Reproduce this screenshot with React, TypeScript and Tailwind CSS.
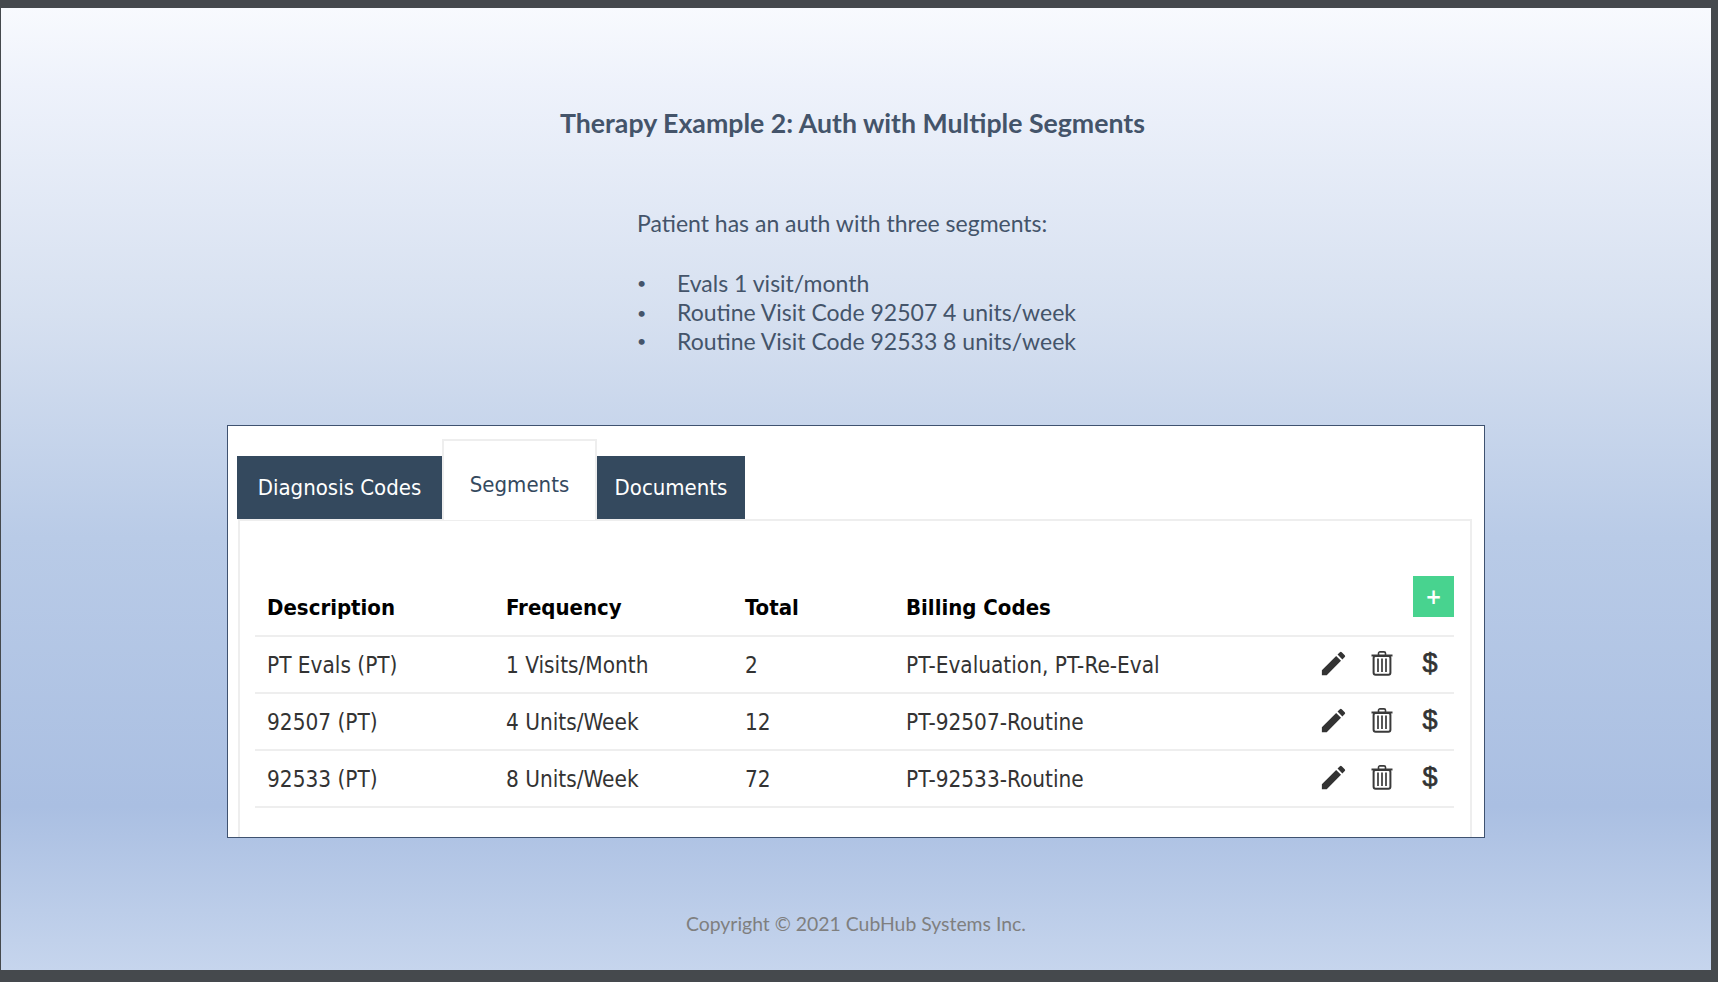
import React from "react";
import { MdEdit } from "react-icons/md";

const rows = [
  ["PT Evals (PT)", "1 Visits/Month", "2", "PT-Evaluation, PT-Re-Eval"],
  ["92507 (PT)", "4 Units/Week", "12", "PT-92507-Routine"],
  ["92533 (PT)", "8 Units/Week", "72", "PT-92533-Routine"],
];

function Trash() {
  return (
    <svg width="22" height="25" viewBox="0 0 22 25" fill="none" stroke="#3a3a3a" strokeWidth="1.6">
      <path d="M0.5 4.5H21.5" strokeWidth="2" />
      <path d="M7.5 4V2.2C7.5 1.4 8.2 0.9 9 0.9H13C13.8 0.9 14.5 1.4 14.5 2.2V4" />
      <rect x="2.6" y="5" width="16.8" height="18.8" rx="2" strokeWidth="2" />
      <path d="M7 7.5V21M11 7.5V21M15 7.5V21" strokeWidth="1.7" />
    </svg>
  );
}

function Actions() {
  return (
    <div className="flex items-center justify-end h-full pr-[12px] -mt-[5px]">
      <span className="w-[24px] flex justify-center"><MdEdit size={31} color="#333333" className="shrink-0" /></span>
      <span className="w-[25px] ml-[24px] flex justify-center"><Trash /></span>
      <span className="w-[24px] ml-[24px] flex justify-center text-[27px] leading-none text-[#333333] [-webkit-text-stroke:0.7px_#333333] font-['Liberation_Sans',sans-serif]">$</span>
    </div>
  );
}

export default function App() {
  return (
    <div className="h-[982px] w-[1718px] overflow-hidden bg-[#45494d] pt-[8px] pl-[1px] pr-[7px] pb-[12px] font-['Lato',sans-serif]">
      <div className="flex h-full flex-col items-start bg-[linear-gradient(180deg,#f8fafe_0%,#eef2fb_8%,#d6e0f0_32%,#b9cbe7_55%,#aabfe2_83%,#c6d5ed_100%)]">
        <h1 className="ml-[559px] mt-[96px] h-[38px] text-[26.7px] leading-[38px] font-bold text-[#44546a] whitespace-nowrap">
          Therapy Example 2: Auth with Multiple Segments
        </h1>
        <div className="ml-[636px] mt-[66px] w-[460px] text-[23px] text-[#44546a]">
          <p className="h-[30px] leading-[30px] whitespace-nowrap">Patient has an auth with three segments:</p>
          <ul className="mt-[30px]">
            <li className="flex h-[30px] items-center whitespace-nowrap"><span className="w-[40px] text-[16px]">•</span>Evals 1 visit/month</li>
            <li className="flex h-[29px] items-center whitespace-nowrap"><span className="w-[40px] text-[16px]">•</span>Routine Visit Code 92507 4 units/week</li>
            <li className="flex h-[28px] items-center whitespace-nowrap"><span className="w-[40px] text-[16px]">•</span>Routine Visit Code 92533 8 units/week</li>
          </ul>
        </div>
        <div className="ml-[226px] mt-[70px] h-[413px] w-[1258px] overflow-hidden border border-[#3f5270] bg-white pl-[9px] pr-[12px] pt-[12px] font-['DejaVu_Sans',sans-serif] font-stretch-condensed">
          <div className="flex h-[81px] items-end">
            <div className="flex h-[63px] w-[205px] items-center justify-center bg-[#34495e] text-[22px] text-white whitespace-nowrap">Diagnosis Codes</div>
            <div className="relative z-10 -mb-[1px] flex h-[81px] w-[155px] justify-center border-2 border-b-0 border-[#eeeeee] bg-white pt-[27px] text-[22px] text-[#34495e] whitespace-nowrap">Segments</div>
            <div className="flex h-[63px] w-[148px] items-center justify-center bg-[#34495e] text-[22px] text-white whitespace-nowrap">Documents</div>
          </div>
          <div className="ml-[1px] h-[320px] border-2 border-b-0 border-[#eeeeee] pl-[15px] pr-[16px] pt-[55px]">
            <div className="grid h-[61px] grid-cols-[239px_239px_161px_1fr_41px] border-b-2 border-[#eeeeee] pl-[12px] text-[22px] font-bold text-black">
              <div className="pt-[15px]">Description</div>
              <div className="pt-[15px]">Frequency</div>
              <div className="pt-[15px]">Total</div>
              <div className="pt-[15px]">Billing Codes</div>
              <div className="flex h-[41px] w-[41px] items-center justify-center bg-[#48d38f] text-[22px] leading-none font-bold text-white">+</div>
            </div>
            {rows.map((r) => (
              <div key={r[0]} className="grid h-[57px] grid-cols-[239px_239px_161px_1fr_200px] items-center border-b-2 border-[#eeeeee] pl-[12px] pt-[2px] text-[22.4px] text-[#333333]">
                <div>{r[0]}</div>
                <div>{r[1]}</div>
                <div>{r[2]}</div>
                <div>{r[3]}</div>
                <Actions />
              </div>
            ))}
          </div>
        </div>
        <p className="ml-[685px] mt-[71px] text-[19.4px] text-[#7f7f7f] whitespace-nowrap">Copyright © 2021 CubHub Systems Inc.</p>
      </div>
    </div>
  );
}
